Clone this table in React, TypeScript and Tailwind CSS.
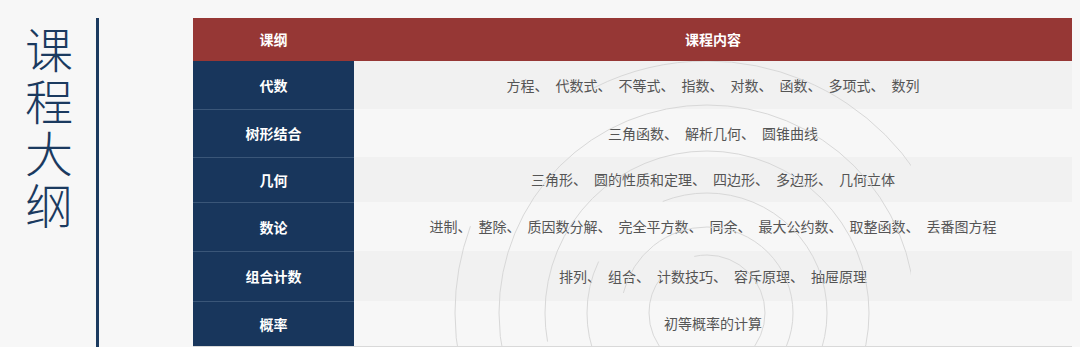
const rows = [
  { name: '代数', h: 'h-[48px]', items: ['方程', '代数式', '不等式', '指数', '对数', '函数', '多项式', '数列'] },
  { name: '树形结合', h: 'h-[48px]', items: ['三角函数', '解析几何', '圆锥曲线'] },
  { name: '几何', h: 'h-[45px]', items: ['三角形', '圆的性质和定理', '四边形', '多边形', '几何立体'] },
  { name: '数论', h: 'h-[49px]', items: ['进制', '整除', '质因数分解', '完全平方数', '同余', '最大公约数', '取整函数', '丢番图方程'] },
  { name: '组合计数', h: 'h-[50px]', items: ['排列', '组合', '计数技巧', '容斥原理', '抽屉原理'] },
  { name: '概率', h: 'h-[45px]', items: ['初等概率的计算'] },
];

// faint concentric watermark behind the content column
function Rings() {
  const cx = 514;
  const cy = 252;
  const rings = [
    { r: 58, dash: '250 40', off: 30 },
    { r: 86, dash: '380 60', off: 150 },
    { r: 120, dash: '520 90', off: 90 },
    { r: 162, dash: '700 110', off: 330 },
    { r: 208, dash: '900 140', off: 480 },
    { r: 252, dash: '1100 190', off: 220 },
  ];
  return (
    <svg className="pointer-events-none absolute left-0 top-0" width="718" height="285" viewBox="0 0 718 285">
      {rings.map((g) => (
        <circle
          key={g.r}
          cx={cx}
          cy={cy}
          r={g.r}
          fill="none"
          stroke="#d8d8d8"
          strokeWidth="1"
          strokeDasharray={g.dash}
          strokeDashoffset={g.off}
        />
      ))}
    </svg>
  );
}

export default function App() {
  return (
    <div
      className="flex h-[347px] w-[1080px] overflow-hidden bg-[#f7f7f7] pt-[18px]"
      style={{ fontFamily: '"Noto Sans CJK SC", "Noto Sans", sans-serif' }}
    >
      <div className="w-[96px] shrink-0 pl-[25px] pt-[3px]">
        <div className="w-[50px] break-all text-[48px] font-light leading-[52px] text-[#1b3a5f]">课程大纲</div>
      </div>
      <div className="w-[3px] shrink-0 bg-[#1b3a5f]" />
      <div className="ml-[94px] w-[879px] shrink-0">
        <div className="flex h-[43px] bg-[#963735] text-[14px] font-bold text-white">
          <div className="flex w-[161px] items-center justify-center">课纲</div>
          <div className="flex flex-1 items-center justify-center">课程内容</div>
        </div>
        <div className="relative border-b border-[#d9d9d9]">
          {rows.map((row, i) => (
            <div key={row.name} className={`flex ${row.h}`}>
              <div
                className={`flex w-[161px] items-center justify-center bg-[#18365c] text-[14px] font-bold text-white ${
                  i > 0 ? 'border-t border-[#3a5678]' : ''
                }`}
              >
                {row.name}
              </div>
              <div
                className={`flex flex-1 items-center justify-center gap-[7px] text-[14px] text-[#555555] ${
                  i % 2 === 0 ? 'bg-[#f1f1f1]' : 'bg-[#f7f7f7]'
                }`}
              >
                {row.items.map((it, j) => (
                  <span key={it}>
                    {it}
                    {j < row.items.length - 1 ? '、' : ''}
                  </span>
                ))}
              </div>
            </div>
          ))}
          <Rings />
        </div>
      </div>
    </div>
  );
}
